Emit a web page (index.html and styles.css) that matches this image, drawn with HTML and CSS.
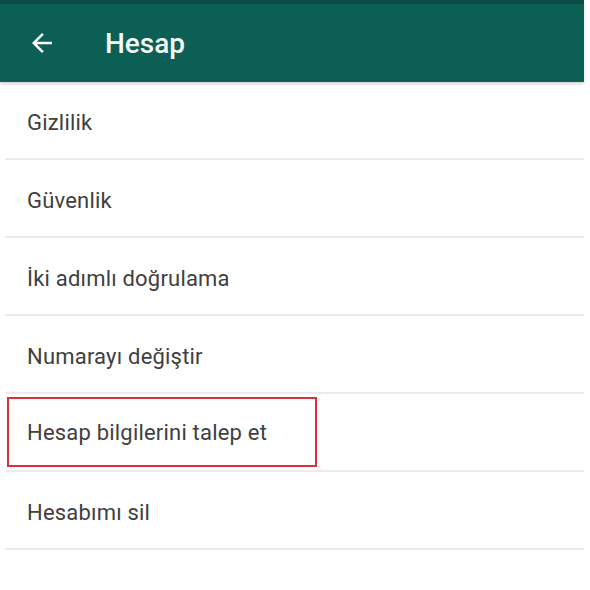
FILE: index.html
```html
<!DOCTYPE html>
<html lang="tr">
<head>
<meta charset="utf-8">
<title>Hesap</title>
<link rel="stylesheet" href="styles.css">
</head>
<body>
<div class="screen">
  <header class="appbar">
    <svg class="back" width="30" height="30" viewBox="0 0 24 24"><path d="M20 11H7.83l5.59-5.59L12 4l-8 8 8 8 1.41-1.41L7.83 13H20v-2z" fill="#fff"/></svg>
    <h1 class="title">Hesap</h1>
  </header>
  <ul class="list">
    <li class="row"><span class="label">Gizlilik</span></li>
    <li class="row"><span class="label">Güvenlik</span></li>
    <li class="row"><span class="label">İki adımlı doğrulama</span></li>
    <li class="row"><span class="label">Numarayı değiştir</span></li>
    <li class="row row-marked"><div class="mark"><span class="label">Hesap bilgilerini talep et</span></div></li>
    <li class="row"><span class="label">Hesabımı sil</span></li>
  </ul>
</div>
</body>
</html>
```
FILE: styles.css
```css
html, body {
  margin: 0;
  padding: 0;
  background: #ffffff;
}
.screen {
  width: 590px;
  height: 590px;
  font-family: Roboto, "Noto Sans", sans-serif;
}
.appbar {
  width: 584px;
  height: 82px;
  box-sizing: border-box;
  background: #0b5f55;
  border-top: 4px solid #0a4c44;
  display: flex;
  align-items: center;
  padding-left: 27px;
  box-shadow: 0 2px 3px rgba(0,0,0,0.18);
}
.back {
  width: 30px;
  height: 30px;
}
.title {
  margin: 0 0 0 48px;
  color: #f2faf8;
  font-size: 28px;
  font-weight: 500;
}
.list {
  list-style: none;
  margin: 0 0 0 5px;
  padding: 0;
  width: 579px;
}
.row {
  height: 78px;
  box-sizing: border-box;
  border-bottom: 2px solid #ececec;
  display: flex;
  align-items: center;
  padding-left: 22px;
  padding-top: 4px;
}
.label {
  font-size: 22px;
  font-weight: 400;
  letter-spacing: 0.2px;
  color: #404040;
}
.row-marked {
  padding-left: 2px;
  padding-top: 3px;
  align-items: flex-start;
}
.mark {
  width: 310px;
  height: 70px;
  box-sizing: border-box;
  border: 2px solid #d9303a;
  display: flex;
  align-items: center;
  padding-left: 18px;
  padding-top: 1px;
}
```
